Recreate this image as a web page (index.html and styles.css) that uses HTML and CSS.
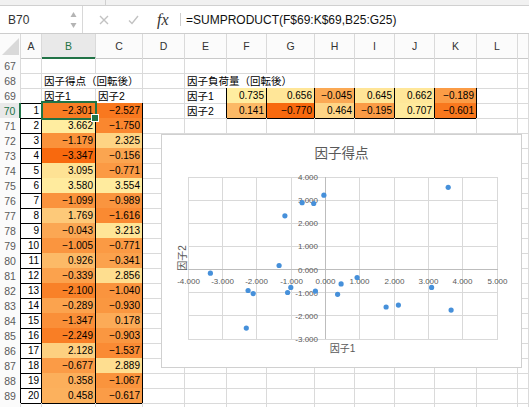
FILE: index.html
```html
<!DOCTYPE html>
<html lang="ja">
<head>
<meta charset="utf-8">
<title>Excel</title>
<link rel="stylesheet" href="styles.css">
</head>
<body>
<div class="strip"><span class="tab"></span></div>
<div class="fbar">
  <div class="namebox"><span>B70</span>
    <svg class="spin" width="7" height="18" viewBox="0 0 7 18"><polygon points="0.5,6 3.5,1 6.5,6" fill="#b4b4b4"/><polygon points="0.5,12 3.5,17 6.5,12" fill="#b4b4b4"/></svg>
  </div>
  <svg class="cancel" width="10" height="10" viewBox="0 0 10 10"><path d="M1 1L9 9M9 1L1 9" stroke="#c2c2c2" stroke-width="1.4" fill="none"/></svg>
  <svg class="enter" width="11" height="10" viewBox="0 0 11 10"><path d="M1 5.5L4 8.5L10 1" stroke="#c2c2c2" stroke-width="1.4" fill="none"/></svg>
  <span class="fx">fx</span>
  <span class="vdiv"></span>
  <span class="formula">=SUMPRODUCT(F$69:K$69,B25:G25)</span>
</div>
<div class="sheet">
  <div class="r hdr">
    <div class="corner"><svg width="20" height="23" viewBox="0 0 20 23"><polygon points="2,21 19,21 19,4" fill="#d9d9d9"/></svg></div>
    <div>A</div><div class="selc">B</div><div>C</div><div>D</div><div>E</div><div>F</div><div>G</div><div>H</div><div>I</div><div>J</div><div>K</div><div>L</div><div></div>
  </div>
  <div class="r"><div class="h">67</div><div></div><div></div><div></div><div></div><div></div><div></div><div></div><div></div><div></div><div></div><div></div><div></div><div></div></div>
  <div class="r"><div class="h">68</div><div></div><div class="j nr">因子得点（回転後）</div><div></div><div></div><div class="j nr">因子負荷量（回転後）</div><div class="nr bb"></div><div class="bb"></div><div class="bb"></div><div class="bb"></div><div class="bb"></div><div class="bb"></div><div></div><div></div></div>
  <div class="r"><div class="h">69</div><div class="bb"></div><div class="j bb">因子1</div><div class="j bb">因子2</div><div></div><div class="j br">因子1</div><div class="n br bb" style="background:rgb(255,237,160)">0.735</div><div class="n br bb" style="background:rgb(255,230,152)">0.656</div><div class="n br bb" style="background:rgb(251,169,84)">&minus;0.045</div><div class="n br bb" style="background:rgb(255,229,151)">0.645</div><div class="n br bb" style="background:rgb(255,231,153)">0.662</div><div class="n br bb" style="background:rgb(251,156,70)">&minus;0.189</div><div></div><div></div></div>
  <div class="r"><div class="h selh">70</div><div class="n br bb">1</div><div class="n br bb sel" style="background:rgb(249,125,36)">&minus;2.301</div><div class="n br bb" style="background:rgb(249,120,31)">&minus;2.527</div><div></div><div class="j br">因子2</div><div class="n br bb" style="background:rgb(252,185,102)">0.141</div><div class="n br bb" style="background:rgb(248,105,14)">&minus;0.770</div><div class="n br bb" style="background:rgb(254,213,134)">0.464</div><div class="n br bb" style="background:rgb(251,155,70)">&minus;0.195</div><div class="n br bb" style="background:rgb(255,234,157)">0.707</div><div class="n br bb" style="background:rgb(249,120,30)">&minus;0.601</div><div></div><div></div></div>
  <div class="r"><div class="h br">71</div><div class="n br bb">2</div><div class="n br bb" style="background:rgb(255,237,160)">3.662</div><div class="n br bb" style="background:rgb(250,135,47)">&minus;1.750</div><div></div><div></div><div></div><div></div><div></div><div></div><div></div><div></div><div></div><div></div></div>
  <div class="r"><div class="h br">72</div><div class="n br bb">3</div><div class="n br bb" style="background:rgb(250,146,59)">&minus;1.179</div><div class="n br bb" style="background:rgb(254,212,132)">2.325</div><div></div><div></div><div></div><div></div><div></div><div></div><div></div><div></div><div></div><div></div></div>
  <div class="r"><div class="h br">73</div><div class="n br bb">4</div><div class="n br bb" style="background:rgb(248,105,14)">&minus;3.347</div><div class="n br bb" style="background:rgb(251,165,80)">&minus;0.156</div><div></div><div></div><div></div><div></div><div></div><div></div><div></div><div></div><div></div><div></div></div>
  <div class="r"><div class="h br">74</div><div class="n br bb">5</div><div class="n br bb" style="background:rgb(254,226,148)">3.095</div><div class="n br bb" style="background:rgb(251,154,68)">&minus;0.771</div><div></div><div></div><div></div><div></div><div></div><div></div><div></div><div></div><div></div><div></div></div>
  <div class="r"><div class="h br">75</div><div class="n br bb">6</div><div class="n br bb" style="background:rgb(255,235,158)">3.580</div><div class="n br bb" style="background:rgb(255,235,158)">3.554</div><div></div><div></div><div></div><div></div><div></div><div></div><div></div><div></div><div></div><div></div></div>
  <div class="r"><div class="h br">76</div><div class="n br bb">7</div><div class="n br bb" style="background:rgb(250,147,61)">&minus;1.099</div><div class="n br bb" style="background:rgb(250,149,63)">&minus;0.989</div><div></div><div></div><div></div><div></div><div></div><div></div><div></div><div></div><div></div><div></div></div>
  <div class="r"><div class="h br">77</div><div class="n br bb">8</div><div class="n br bb" style="background:rgb(253,201,121)">1.769</div><div class="n br bb" style="background:rgb(250,138,50)">&minus;1.616</div><div></div><div></div><div></div><div></div><div></div><div></div><div></div><div></div><div></div><div></div></div>
  <div class="r"><div class="h br">78</div><div class="n br bb">9</div><div class="n br bb" style="background:rgb(251,167,83)">&minus;0.043</div><div class="n br bb" style="background:rgb(255,229,151)">3.213</div><div></div><div></div><div></div><div></div><div></div><div></div><div></div><div></div><div></div><div></div></div>
  <div class="r"><div class="h br">79</div><div class="n br bb">10</div><div class="n br bb" style="background:rgb(250,149,63)">&minus;1.005</div><div class="n br bb" style="background:rgb(251,154,68)">&minus;0.771</div><div></div><div></div><div></div><div></div><div></div><div></div><div></div><div></div><div></div><div></div></div>
  <div class="r"><div class="h br">80</div><div class="n br bb">11</div><div class="n br bb" style="background:rgb(252,186,103)">0.926</div><div class="n br bb" style="background:rgb(251,162,77)">&minus;0.341</div><div></div><div></div><div></div><div></div><div></div><div></div><div></div><div></div><div></div><div></div></div>
  <div class="r"><div class="h br">81</div><div class="n br bb">12</div><div class="n br bb" style="background:rgb(251,162,77)">&minus;0.339</div><div class="n br bb" style="background:rgb(254,222,143)">2.856</div><div></div><div></div><div></div><div></div><div></div><div></div><div></div><div></div><div></div><div></div></div>
  <div class="r"><div class="h br">82</div><div class="n br bb">13</div><div class="n br bb" style="background:rgb(249,129,40)">&minus;2.100</div><div class="n br bb" style="background:rgb(250,148,62)">&minus;1.040</div><div></div><div></div><div></div><div></div><div></div><div></div><div></div><div></div><div></div><div></div></div>
  <div class="r"><div class="h br">83</div><div class="n br bb">14</div><div class="n br bb" style="background:rgb(251,163,78)">&minus;0.289</div><div class="n br bb" style="background:rgb(250,151,64)">&minus;0.930</div><div></div><div></div><div></div><div></div><div></div><div></div><div></div><div></div><div></div><div></div></div>
  <div class="r"><div class="h br">84</div><div class="n br bb">15</div><div class="n br bb" style="background:rgb(250,143,56)">&minus;1.347</div><div class="n br bb" style="background:rgb(252,171,87)">0.178</div><div></div><div></div><div></div><div></div><div></div><div></div><div></div><div></div><div></div><div></div></div>
  <div class="r"><div class="h br">85</div><div class="n br bb">16</div><div class="n br bb" style="background:rgb(249,126,37)">&minus;2.249</div><div class="n br bb" style="background:rgb(250,151,65)">&minus;0.903</div><div></div><div></div><div></div><div></div><div></div><div></div><div></div><div></div><div></div><div></div></div>
  <div class="r"><div class="h br">86</div><div class="n br bb">17</div><div class="n br bb" style="background:rgb(253,208,128)">2.128</div><div class="n br bb" style="background:rgb(250,139,52)">&minus;1.537</div><div></div><div></div><div></div><div></div><div></div><div></div><div></div><div></div><div></div><div></div></div>
  <div class="r"><div class="h br">87</div><div class="n br bb">18</div><div class="n br bb" style="background:rgb(251,155,70)">&minus;0.677</div><div class="n br bb" style="background:rgb(254,222,144)">2.889</div><div></div><div></div><div></div><div></div><div></div><div></div><div></div><div></div><div></div><div></div></div>
  <div class="r"><div class="h br">88</div><div class="n br bb">19</div><div class="n br bb" style="background:rgb(252,175,91)">0.358</div><div class="n br bb" style="background:rgb(250,148,61)">&minus;1.067</div><div></div><div></div><div></div><div></div><div></div><div></div><div></div><div></div><div></div><div></div></div>
  <div class="r"><div class="h br">89</div><div class="n br bb">20</div><div class="n br bb" style="background:rgb(252,177,93)">0.458</div><div class="n br bb" style="background:rgb(251,156,71)">&minus;0.617</div><div></div><div></div><div></div><div></div><div></div><div></div><div></div><div></div><div></div><div></div></div>
  <div class="r"><div class="h"></div><div></div><div></div><div></div><div></div><div></div><div></div><div></div><div></div><div></div><div></div><div></div><div></div><div></div></div>

  <div class="chart">
    <svg width="361" height="234" viewBox="0 0 361 234">
      <rect x="0.5" y="0.5" width="360" height="233" fill="#fff" stroke="#d0d0d0"/>
      <text class="title" x="180.5" y="24" text-anchor="middle">因子得点</text>
      <g stroke="#d9d9d9" stroke-width="1">
        <line x1="27.5" y1="43" x2="27.5" y2="205"/>
        <line x1="61.5" y1="43" x2="61.5" y2="205"/>
        <line x1="95.5" y1="43" x2="95.5" y2="205"/>
        <line x1="130.5" y1="43" x2="130.5" y2="205"/>
        <line x1="198.5" y1="43" x2="198.5" y2="205"/>
        <line x1="233.5" y1="43" x2="233.5" y2="205"/>
        <line x1="267.5" y1="43" x2="267.5" y2="205"/>
        <line x1="301.5" y1="43" x2="301.5" y2="205"/>
        <line x1="336.5" y1="43" x2="336.5" y2="205"/>
        <line x1="27" y1="43.5" x2="337" y2="43.5"/>
        <line x1="27" y1="66.5" x2="337" y2="66.5"/>
        <line x1="27" y1="89.5" x2="337" y2="89.5"/>
        <line x1="27" y1="112.5" x2="337" y2="112.5"/>
        <line x1="27" y1="158.5" x2="337" y2="158.5"/>
        <line x1="27" y1="181.5" x2="337" y2="181.5"/>
        <line x1="27" y1="205.5" x2="337" y2="205.5"/>
      </g>
      <g stroke="#bdbdbd" stroke-width="1">
        <line x1="164.5" y1="43" x2="164.5" y2="205"/>
        <line x1="27" y1="135.5" x2="337" y2="135.5"/>
      </g>
      <g class="tick" text-anchor="end">
        <text x="157" y="46">4.000</text>
        <text x="157" y="69">3.000</text>
        <text x="157" y="92">2.000</text>
        <text x="157" y="115">1.000</text>
        <text x="157" y="138.5">0.000</text>
        <text x="157" y="161.5">-1.000</text>
        <text x="157" y="184.5">-2.000</text>
        <text x="157" y="208">-3.000</text>
      </g>
      <g class="tick" text-anchor="middle">
        <text x="27.5" y="150">-4.000</text>
        <text x="61.5" y="150">-3.000</text>
        <text x="95.5" y="150">-2.000</text>
        <text x="130.5" y="150">-1.000</text>
        <text x="164.5" y="150">0.000</text>
        <text x="198.5" y="150">1.000</text>
        <text x="233.5" y="150">2.000</text>
        <text x="267.5" y="150">3.000</text>
        <text x="301.5" y="150">4.000</text>
        <text x="336.5" y="150">5.000</text>
      </g>
      <text class="axt" x="181.5" y="218" text-anchor="middle">因子1</text>
      <text class="axt" transform="translate(25,124) rotate(-90)" text-anchor="middle">因子2</text>
      <g fill="#4690da">
        <circle cx="85.3" cy="194.1" r="2.6"/>
        <circle cx="290.1" cy="176.1" r="2.6"/>
        <circle cx="123.9" cy="81.8" r="2.6"/>
        <circle cx="49.4" cy="139.2" r="2.6"/>
        <circle cx="270.6" cy="153.4" r="2.6"/>
        <circle cx="287.2" cy="53.3" r="2.6"/>
        <circle cx="126.6" cy="158.5" r="2.6"/>
        <circle cx="225.1" cy="173" r="2.6"/>
        <circle cx="162.9" cy="61.2" r="2.6"/>
        <circle cx="129.8" cy="153.4" r="2.6"/>
        <circle cx="196.1" cy="143.5" r="2.6"/>
        <circle cx="152.7" cy="69.5" r="2.6"/>
        <circle cx="92.2" cy="159.6" r="2.6"/>
        <circle cx="154.4" cy="157.1" r="2.6"/>
        <circle cx="118.1" cy="131.5" r="2.6"/>
        <circle cx="87.1" cy="156.5" r="2.6"/>
        <circle cx="237.4" cy="171.1" r="2.6"/>
        <circle cx="141.1" cy="68.7" r="2.6"/>
        <circle cx="176.6" cy="160.3" r="2.6"/>
        <circle cx="180.1" cy="149.9" r="2.6"/>
      </g>
    </svg>
  </div>
</div>
</body>
</html>
```

FILE: styles.css
```css
* { box-sizing: border-box; }

body {
  margin: 0;
  width: 529px;
  height: 407px;
  overflow: hidden;
  background: #fff;
  color: #000;
  font-family: "Liberation Sans", "Noto Sans CJK JP", sans-serif;
}

.strip {
  position: relative;
  height: 6px;
  background: #f1f1f1;
  border-bottom: 1px solid #d0d0d0;
}
.strip .tab {
  position: absolute;
  left: 105px;
  top: 0;
  width: 1px;
  height: 5px;
  background: #d0d0d0;
}

.fbar {
  height: 28px;
  display: flex;
  align-items: center;
  border-bottom: 1px solid #cdcdcd;
}
.namebox {
  width: 83px;
  height: 100%;
  display: flex;
  align-items: center;
  justify-content: space-between;
  padding: 0 5px 0 8px;
  border-right: 1px solid #d8d8d8;
  font-size: 12px;
  color: #333;
}
.spin { display: block; }
.cancel { margin-left: 16px; display: block; }
.enter { margin-left: 19px; display: block; }
.fx {
  margin-left: 18px;
  width: 14px;
  font-family: "Liberation Serif", serif;
  font-style: italic;
  font-size: 16px;
  color: #333;
}
.vdiv {
  margin-left: 9px;
  width: 1px;
  height: 13px;
  background: #cfcfcf;
}
.formula {
  margin-left: 5px;
  font-size: 12px;
  color: #111;
  white-space: nowrap;
}

.sheet { position: relative; }

.r {
  display: grid;
  grid-template-columns: 21px 21px 54px 47px 42px 42px 40px 48px 40px 40px 40px 42px 41px 11px;
  height: 15px;
}
.r > div {
  border-right: 1px solid #dadada;
  border-bottom: 1px solid #dadada;
  white-space: nowrap;
  font-size: 10px;
  line-height: 14px;
  padding: 1px 2px 0 2px;
}
.r.hdr { height: 24px; }
.r.hdr > div {
  background: #fbfbfb;
  border-bottom-color: #c9c9c9;
  font-size: 10.5px;
  line-height: 22px;
  color: #333;
  text-align: center;
}
.r.hdr > div.corner { padding: 0; }
.corner svg { display: block; }

.h {
  background: #fbfbfb;
  color: #5a5a5a;
  text-align: center;
  font-size: 10.5px !important;
}
.n { text-align: right; }
.j { font-size: 10.5px !important; }

.r > .br { border-right-color: #000; }
.r > .bb { border-bottom-color: #000; }
.r > .nr { border-right-color: transparent; }

.r > .selh {
  color: #217346;
  background: #e9e9e9;
  border-right: 2px solid #217346;
}
.r.hdr > .selc {
  color: #217346;
  background: #e9e9e9;
  border-bottom: 2px solid #217346;
}

.sel { position: relative; }
.sel::after {
  content: "";
  position: absolute;
  left: -1px;
  top: -2px;
  right: -2px;
  bottom: -2px;
  border: 2px solid #217346;
}
.sel::before {
  content: "";
  position: absolute;
  right: -4px;
  bottom: -4px;
  width: 6px;
  height: 6px;
  background: #217346;
  border: 1px solid #fff;
  z-index: 1;
}

.chart {
  position: absolute;
  left: 161px;
  top: 100px;
  width: 361px;
  height: 234px;
  z-index: 2;
}
.chart svg { display: block; }
.chart .title {
  font-family: "Noto Sans CJK JP", sans-serif;
  font-size: 13.5px;
  fill: #595959;
}
.chart .tick {
  font-family: "Liberation Sans", sans-serif;
  font-size: 8px;
  fill: #595959;
}
.chart .axt {
  font-family: "Liberation Sans", "Noto Sans CJK JP", sans-serif;
  font-size: 10px;
  fill: #595959;
}
```
